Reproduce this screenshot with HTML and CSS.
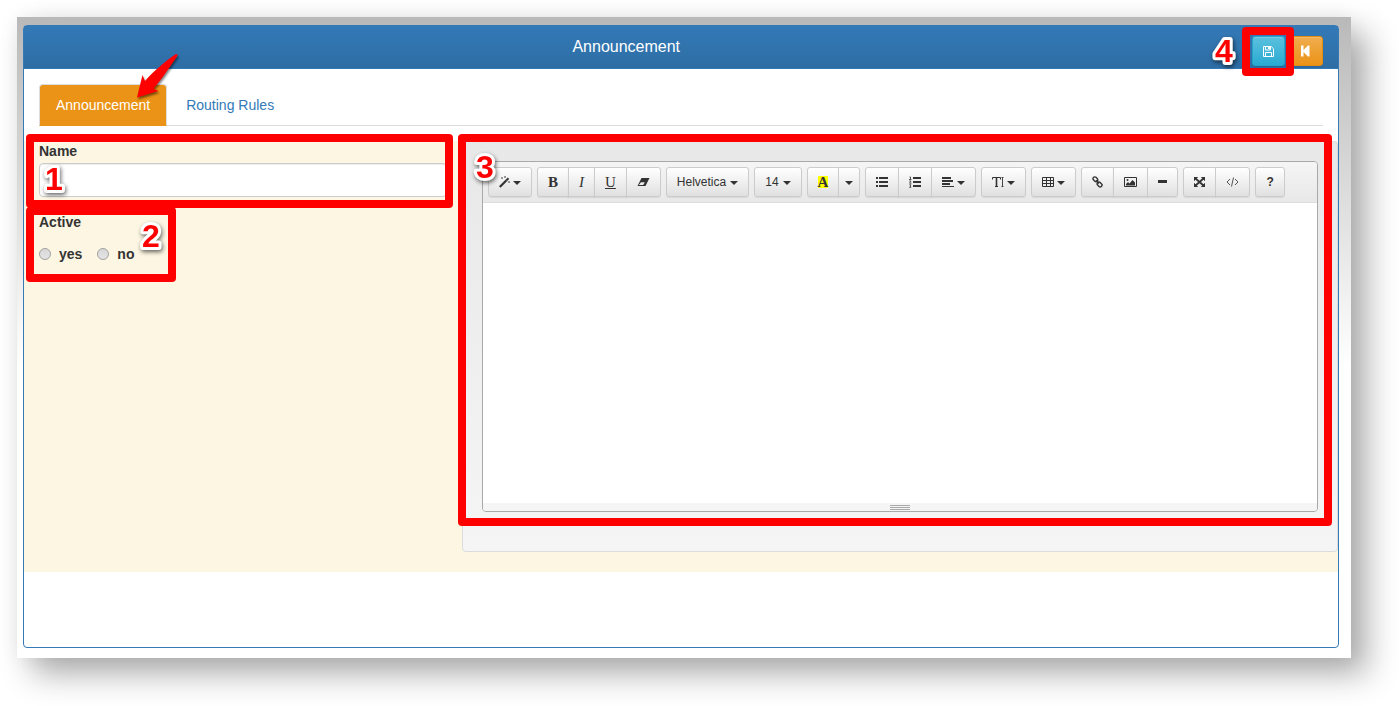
FILE: index.html
```
<!DOCTYPE html>
<html lang="en">
<head>
	<meta charset="UTF-8">
	<title>Announcement</title>
	<link rel="stylesheet" href="styles.css">
</head>
<body>

<div class="sheet">
<div class="panel">

	<div class="panel-heading">
		<div class="title">Announcement</div>
		<div class="actions">
			<div class="marked">
				<button type="button" class="btn btn-info" aria-label="Save">
					<svg width="11" height="11" viewBox="0 0 11 11"><path d="M.5.5h7.7l2.3 2.3v7.7H.5z" fill="none" stroke="#fff"/><path d="M2.5 1v3h5V1M2.5 10V6.5h6V10" fill="none" stroke="#fff"/><path d="M5 1h2v2H5z" fill="#fff"/></svg>
				</button>
				<div class="mark mark-save"></div>
				<svg class="num num-4" width="30" height="40"><text x="6" y="31">4</text></svg>
			</div>
			<button type="button" class="btn btn-warning" aria-label="Back">
				<svg width="9" height="12" viewBox="0 0 9 12"><path d="M0 .5h2.500v4.500L7 .5h1.500v11H7L2.500 7v4.500H0z" fill="#fff"/></svg>
			</button>
		</div>
	</div>

	<ul class="nav-tabs">
		<li class="active">
			<a href="#announcement">Announcement</a>
			<svg class="arrow" width="52" height="54" viewBox="0 0 52 54"><path d="M3 46.500L8.500 24l2.500 6C19 21 30 11 42 3l2 1C37 14 29 27 19.500 37.500l5 2.500z" fill="#f00"/></svg>
		</li>
		<li><a href="#routing">Routing Rules</a></li>
	</ul>

	<div class="row">
		<div class="col-form">
			<div class="form-group">
				<label for="name">Name</label>
				<input type="text" id="name" class="form-control">
				<div class="mark mark-name"></div>
				<svg class="num num-1" width="30" height="40"><text x="6" y="31">1</text></svg>
			</div>
			<div class="form-group" role="radiogroup" aria-labelledby="active-label">
				<div class="group-label" id="active-label">Active</div>
				<div class="radios">
					<label><input type="radio" name="active" value="1">yes</label>
					<label><input type="radio" name="active" value="0">no</label>
				</div>
				<div class="mark mark-active"></div>
				<svg class="num num-2" width="30" height="40"><text x="6" y="31">2</text></svg>
			</div>
		</div>

		<div class="well">
			<div class="note-editor">
				<div class="note-toolbar">
					<div class="btn-group">
						<button type="button" class="btn" aria-label="Style">
							<svg width="11" height="12" viewBox="0 0 11 12"><path d="M.8 11L7.500 4.300" stroke="#333" stroke-width="2.200"/><path d="M7.500 4.300l2-2" stroke="#333" stroke-width="2"/><path d="M3 1v2M2 2h2M6 0v2M5 1h2M10 5v2M9 6h2" stroke="#666" stroke-width=".8"/></svg>
							<span class="caret"></span>
						</button>
					</div>
					<div class="btn-group">
						<button type="button" class="btn serif"><b>B</b></button>
						<button type="button" class="btn serif"><i>I</i></button>
						<button type="button" class="btn serif"><u>U</u></button>
						<button type="button" class="btn" aria-label="Clear">
							<svg width="13" height="12" viewBox="0 0 13 12"><path d="M4.500 2H12.500L8.500 10H.5z" fill="#333"/><path d="M1.800 9L4 6.300h3.800L6.200 9z" fill="#eee"/></svg>
						</button>
					</div>
					<div class="btn-group">
						<button type="button" class="btn btn-text">Helvetica<span class="caret"></span></button>
					</div>
					<div class="btn-group">
						<button type="button" class="btn btn-text">14<span class="caret"></span></button>
					</div>
					<div class="btn-group">
						<button type="button" class="btn serif"><b class="hilite">A</b></button>
						<button type="button" class="btn btn-caret" aria-label="More colors"><span class="caret"></span></button>
					</div>
					<div class="btn-group">
						<button type="button" class="btn" aria-label="Unordered list">
							<svg width="12" height="12" viewBox="0 0 12 12"><path d="M0 1h2v2H0zM0 5h2v2H0zM0 9h2v2H0zM3 1h9v2H3zM3 5h9v2H3zM3 9h9v2H3z" fill="#333"/></svg>
						</button>
						<button type="button" class="btn" aria-label="Ordered list">
							<svg width="12" height="12" viewBox="0 0 12 12"><path d="M4 1h8v2H4zM4 5h8v2H4zM4 9h8v2H4z" fill="#333"/><path d="M.5 1h1v2.500M0 3.500h2.500M.3 5h1.700L.5 7.200h2M.3 8.800H2L1.200 10 2 11.300H.2" fill="none" stroke="#333" stroke-width=".8"/></svg>
						</button>
						<button type="button" class="btn" aria-label="Paragraph">
							<svg width="12" height="12" viewBox="0 0 12 12"><path d="M0 1h9v2H0zM0 4h11v2H0zM0 7h8v2H0zM0 10h12v1H0z" fill="#333"/></svg>
							<span class="caret"></span>
						</button>
					</div>
					<div class="btn-group">
						<button type="button" class="btn" aria-label="Line height">
							<svg width="12" height="12" viewBox="0 0 12 12"><path d="M.5 3.500V1.500h8v2M3 10.500h3" fill="none" stroke="#333"/><path d="M4.500 1.500v9" stroke="#333" stroke-width="1.600"/><path d="M10.500 1.500v9M9.500 1.500h2M9.500 10.500h2" stroke="#444"/></svg>
							<span class="caret"></span>
						</button>
					</div>
					<div class="btn-group">
						<button type="button" class="btn" aria-label="Table">
							<svg width="12" height="12" viewBox="0 0 12 12"><path d="M.5 1.500h11v9H.5zM.5 4.500h11M.5 7.500h11M4.500 1.500v9M8.500 1.500v9" fill="none" stroke="#333"/></svg>
							<span class="caret"></span>
						</button>
					</div>
					<div class="btn-group">
						<button type="button" class="btn" aria-label="Link">
							<svg width="11" height="12" viewBox="0 0 11 12"><g fill="none" stroke="#333" stroke-width="1.400"><rect x=".8" y="1.500" width="5.200" height="3.600" rx="1.600" transform="rotate(45 3.400 3.300)"/><rect x="5" y="6.700" width="5.200" height="3.600" rx="1.600" transform="rotate(45 7.600 8.500)"/><path d="M4 4.200l3 3.300"/></g></svg>
						</button>
						<button type="button" class="btn" aria-label="Picture">
							<svg width="13" height="12" viewBox="0 0 13 12"><path d="M.5 1.500h12v9H.5z" fill="none" stroke="#333"/><path d="M2 9.500V8l2-2 1.500 1.500L8.500 4 11 6.500v3z" fill="#333"/><circle cx="3.500" cy="4" r="1" fill="#333"/></svg>
						</button>
						<button type="button" class="btn" aria-label="Insert rule">
							<svg width="9" height="12" viewBox="0 0 9 12"><path d="M0 4h9v3H0z" fill="#333"/></svg>
						</button>
					</div>
					<div class="btn-group">
						<button type="button" class="btn" aria-label="Full screen">
							<svg width="11" height="12" viewBox="0 0 11 12"><path d="M0 1h4.200L0 5.200zM11 1v4.200L6.800 1zM0 11V6.800L4.200 11zM11 11H6.800L11 6.800z" fill="#333"/><path d="M1.500 2.500l8 7M9.500 2.500l-8 7" stroke="#333" stroke-width="1.800"/></svg>
						</button>
						<button type="button" class="btn" aria-label="Code view">
							<svg width="13" height="12" viewBox="0 0 13 12"><path d="M4 3L1 6l3 3M9 3l3 3-3 3M7.500 1.500l-2 9" fill="none" stroke="#555"/></svg>
						</button>
					</div>
					<div class="btn-group">
						<button type="button" class="btn" aria-label="Help"><b>?</b></button>
					</div>
				</div>
				<textarea class="note-editable" aria-label="Content"></textarea>
				<div class="note-statusbar">
					<div class="note-resizebar"></div>
				</div>
			</div>
			<div class="mark mark-editor"></div>
			<svg class="num num-3" width="30" height="40"><text x="6" y="31">3</text></svg>
		</div>
	</div>

</div>
</div>

</body>
</html>
```
FILE: styles.css
```
*{
	box-sizing: border-box;
}
body{
	margin: 0;
	padding: 17px 48px 48px 17px;
	background-color: #fff;
	color: #333;
	font-family: "Liberation Sans", Arial, sans-serif;
	font-size: 14px;
	line-height: 20px;
}
.sheet{
	padding: 8px 12px 10px 6px;
	background: linear-gradient(#b9b9b9, #fff 350px);
	box-shadow: 16px 16px 30px rgba(0,0,0,0.32), 0 0 20px rgba(0,0,0,0.06);
}
.panel{
	border: 1px solid #337ab7;
	border-radius: 4px;
	background-color: #fff;
}

/* heading */
.panel-heading{
	display: grid;
	grid-template-columns: 11fr 1fr;
	padding: 10px 0 2px;
	border-bottom: 1px solid #337ab7;
	background: linear-gradient(#337ab7, #2e6da4);
}
.title{
	color: #fff;
	font-size: 16px;
	line-height: 22px;
	text-align: center;
}
.actions{
	display: flex;
	justify-content: flex-end;
	gap: 3px;
	padding-right: 15px;
}
.marked{
	position: relative;
}

/* buttons */
.btn{
	display: flex;
	align-items: center;
	justify-content: center;
	height: 30px;
	padding: 0 10px;
	border: 1px solid #ccc;
	border-radius: 3px;
	background: linear-gradient(#fff, #e0e0e0);
	color: #333;
	font-family: inherit;
	font-size: 12px;
	line-height: 18px;
	box-shadow: inset 0 1px 0 rgba(255,255,255,0.15), 0 1px 1px rgba(0,0,0,0.075);
}
.btn-info{
	width: 33px;
	border-color: #28a4c9;
	background: linear-gradient(#5bc0de, #2aabd2);
}
.btn-warning{
	width: 35px;
	border-color: #e38d13;
	background: linear-gradient(#f0ad4e, #eb9316);
}
.caret{
	width: 8px;
	height: 4px;
	margin: 2px 0 0 3px;
	border-top: 4px solid #333;
	border-left: 4px solid transparent;
	border-right: 4px solid transparent;
}
.btn-text .caret{
	margin-left: 4px;
}

/* tabs */
.nav-tabs{
	display: flex;
	gap: 2px;
	margin: 15px;
	padding: 0;
	border-bottom: 1px solid #ddd;
	list-style: none;
}
.nav-tabs li{
	position: relative;
	margin-bottom: -1px;
}
.nav-tabs a{
	display: block;
	padding: 10px 16px;
	border: 1px solid transparent;
	border-radius: 4px 4px 0 0;
	color: #337ab7;
	text-decoration: none;
}
.nav-tabs .active a{
	border-color: #ddd;
	border-bottom-color: #eb9316;
	background-color: #eb9316;
	color: #fff;
}
.arrow{
	position: absolute;
	top: -33px;
	left: 95px;
	filter: drop-shadow(1px 2px 1px rgba(0,0,0,0.5));
}

/* content */
.row{
	display: grid;
	grid-template-columns: 1fr 2fr;
	margin-bottom: 75px;
	background-color: #fdf6e3;
}
.col-form{
	padding: 0 15px;
}
.form-group{
	position: relative;
	margin-bottom: 15px;
	font-weight: bold;
}
.form-group > label{
	display: block;
	margin-bottom: 2px;
}
.form-control{
	display: block;
	width: 100%;
	height: 34px;
	padding: 6px 12px;
	border: 1px solid #ccc;
	border-radius: 4px;
	font-size: 14px;
	box-shadow: inset 0 1px 1px rgba(0,0,0,0.075);
}
.radios{
	display: flex;
	gap: 15px;
	margin-top: 12px;
}
.radios label{
	display: flex;
	align-items: center;
	gap: 8px;
}
.radios input{
	appearance: none;
	width: 12px;
	height: 12px;
	margin: 0;
	border: 1px solid #a0a0a0;
	border-radius: 50%;
	background: linear-gradient(#d8d8d8, #e4e4e4);
}

/* editor */
.well{
	position: relative;
	margin-bottom: 20px;
	padding: 19px 19px 39px;
	border: 1px solid #dcdcdc;
	border-radius: 4px;
	background: linear-gradient(#e8e8e8, #f5f5f5);
}
.note-editor{
	overflow: hidden;
	border: 1px solid #a9a9a9;
	border-radius: 4px;
}
.note-toolbar{
	display: flex;
	flex-wrap: wrap;
	gap: 5px;
	padding: 5px;
	border-bottom: 1px solid #ddd;
	background: linear-gradient(#f5f5f5, #e8e8e8);
}
.btn-group{
	display: flex;
}
.btn-group .btn + .btn{
	margin-left: -1px;
	border-top-left-radius: 0;
	border-bottom-left-radius: 0;
}
.btn-group .btn:not(:last-child){
	border-top-right-radius: 0;
	border-bottom-right-radius: 0;
}
.serif{
	font-family: "Liberation Serif", "Times New Roman", serif;
	font-size: 15px;
}
.hilite{
	background-color: #ff0;
	line-height: 12px;
}
.btn-caret{
	padding: 0 6px;
}
.btn-caret .caret{
	margin-left: 0;
}
.note-editable{
	display: block;
	width: 100%;
	height: 300px;
	padding: 10px;
	border: 0;
	background-color: #fff;
	resize: none;
}
.note-statusbar{
	padding-top: 2px;
	height: 8px;
	background-color: #f5f5f5;
}
.note-resizebar{
	width: 20px;
	height: 5px;
	margin: 0 auto;
	background: repeating-linear-gradient(#a9a9a9 0 1px, transparent 1px 2px);
}

/* numbered callouts */
.mark{
	position: absolute;
	border: 8px solid #f00;
	border-radius: 4px;
	pointer-events: none;
}
.mark-name{
	top: -7px;
	right: -6px;
	bottom: -11px;
	left: -13px;
}
.mark-active{
	top: -5px;
	left: -13px;
	width: 150px;
	height: 75px;
}
.mark-editor{
	top: -8px;
	right: 5px;
	bottom: 25px;
	left: -5px;
}
.mark-save{
	top: -9px;
	right: -9px;
	bottom: -10px;
	left: -10px;
}
.num{
	position: absolute;
	overflow: visible;
	filter: drop-shadow(1px 2px 2px rgba(0,0,0,0.6));
	pointer-events: none;
}
.num text{
	fill: #f00;
	stroke: #fff;
	stroke-width: 6px;
	stroke-linejoin: round;
	paint-order: stroke;
	font-size: 32px;
	font-weight: bold;
}
.num-1{
	top: 18px;
	left: 0;
}
.num-2{
	top: 4px;
	left: 97px;
}
.num-3{
	top: 5px;
	left: 7px;
}
.num-4{
	top: -5px;
	left: -43px;
}
```
